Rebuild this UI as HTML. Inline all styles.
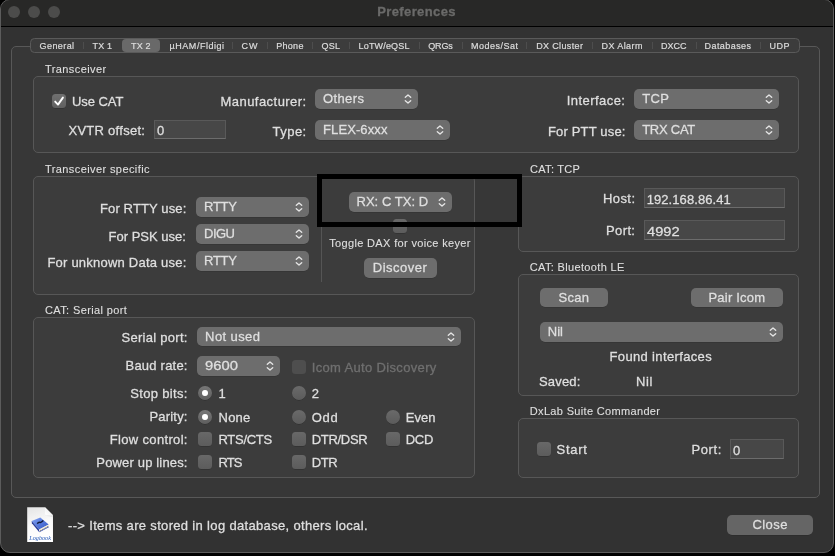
<!DOCTYPE html>
<html lang="en"><head><meta charset="utf-8"><title>Preferences</title>
<style>
html,body{margin:0;padding:0;background:#000;}
body{width:835px;height:556px;overflow:hidden;position:relative;font-family:"Liberation Sans",sans-serif;}
#win{position:absolute;left:0;top:-1px;width:832px;height:552px;background:#323232;border:1px solid #5c5c5c;border-radius:10px;overflow:hidden;}
#tb{position:absolute;left:0;top:0;width:835px;height:26px;background:#282827;border-bottom:1px solid #000;}
.tl{position:absolute;top:5.9px;width:12px;height:12px;border-radius:50%;background:#4c4c4b;}
.t{position:absolute;white-space:pre;color:#dfdfdf;-webkit-text-stroke:0.3px currentColor;}
#txt{position:absolute;left:0;top:0;width:835px;height:556px;will-change:transform;}
.s13{font-size:13px;line-height:16px;}
.s11{font-size:11px;line-height:14px;-webkit-text-stroke-width:0.12px;}
.s9{font-size:9px;line-height:12px;-webkit-text-stroke-width:0.2px;}
.title{font-weight:bold;color:#6a6a69;}
.tab{color:#dcdcdc;}
.dim{color:#6f6f6f;}
.gb{position:absolute;box-sizing:border-box;border:1px solid #575757;border-radius:5px;background:#3c3c3c;}
.gb.outer{background:#373737;border-color:#585858;}
.tabbar{position:absolute;box-sizing:border-box;border:1px solid #5a5a5a;border-radius:4.5px;background:#3c3c3c;}
.tabsel{position:absolute;box-sizing:border-box;border-radius:4px;background:#696969;}
.tsep{position:absolute;width:1px;height:7px;background:#4d4d4d;}
.vsep{position:absolute;width:1px;background:#555;}
.pop{position:absolute;box-sizing:border-box;border-radius:5px;background:rgba(255,255,255,.25);box-shadow:0 0.5px 0.5px rgba(0,0,0,.2);}
.fld{position:absolute;box-sizing:border-box;background:#474747;border:1px solid #595959;border-bottom-color:#6c6c6c;}
.cb{position:absolute;width:14px;height:14px;box-sizing:border-box;border-radius:3.5px;background:linear-gradient(#686868,#5c5c5c);box-shadow:0 0.5px 0.5px rgba(0,0,0,.3);}
.cb.on{background:linear-gradient(#707070,#606060);}
.cb.dimc{background:#4e4e4e;box-shadow:none;}
.cb svg{position:absolute;left:0;top:0;}
.rb{position:absolute;width:14px;height:14px;box-sizing:border-box;border-radius:50%;background:linear-gradient(#6a6a6a,#5b5b5b);box-shadow:0 0.5px 0.5px rgba(0,0,0,.3);}
.rb.on{background:linear-gradient(#787878,#5e5e5e);}
.rb i{position:absolute;left:4.1px;top:4.2px;width:5.8px;height:5.8px;border-radius:50%;background:#fff;}
.chev,.icon{position:absolute;}
.icon{will-change:transform;}
#ann{position:absolute;box-sizing:border-box;left:317px;top:174px;width:205px;height:53px;border:5px solid #000;}
</style></head>
<body>
<div id="win"><div id="tb"></div></div>
<div class="tl" style="left:8px"></div>
<div class="tl" style="left:28px"></div>
<div class="tl" style="left:48px"></div>
<div class="gb outer" style="left:11px;top:46px;width:808.5px;height:452px"></div>
<div class="tabbar" style="left:30px;top:38px;width:770px;height:15px"></div>
<div class="tabsel" style="left:122px;top:39px;width:38px;height:13px"></div>
<div class="tsep" style="left:82.5px;top:42px"></div>
<div class="tsep" style="left:232.2px;top:42px"></div>
<div class="tsep" style="left:267.1px;top:42px"></div>
<div class="tsep" style="left:312.3px;top:42px"></div>
<div class="tsep" style="left:349.2px;top:42px"></div>
<div class="tsep" style="left:418.5px;top:42px"></div>
<div class="tsep" style="left:461.5px;top:42px"></div>
<div class="tsep" style="left:526.1px;top:42px"></div>
<div class="tsep" style="left:591.5px;top:42px"></div>
<div class="tsep" style="left:651.8px;top:42px"></div>
<div class="tsep" style="left:695.5px;top:42px"></div>
<div class="tsep" style="left:759.5px;top:42px"></div>
<div class="gb" style="left:33px;top:76px;width:766px;height:77px"></div>
<div class="gb" style="left:33px;top:176px;width:442px;height:119px"></div>
<div class="gb" style="left:518px;top:176px;width:281px;height:76px"></div>
<div class="gb" style="left:518px;top:274px;width:281px;height:122px"></div>
<div class="gb" style="left:518px;top:418px;width:281px;height:60px"></div>
<div class="gb" style="left:33px;top:317px;width:442px;height:161px"></div>
<div class="vsep" style="left:320.5px;top:184px;height:98px"></div>
<div class="cb on" style="left:52px;top:94.3px"><svg width="14" height="14" viewBox="0 0 14 14"><path d="M3.2 7.6 L6 10.6 L10.9 3.6" fill="none" stroke="#fff" stroke-width="1.9" stroke-linecap="round" stroke-linejoin="round"/></svg></div>
<div class="fld" style="left:154px;top:120px;width:72px;height:19px"></div>
<div class="pop" style="left:315px;top:89px;width:103px;height:20px"></div><svg class="chev" style="left:403.0px;top:91.8px" width="10" height="14" viewBox="-5 -7 10 14"><path d="M-2.7 -1.8 L0 -4.1 L2.7 -1.8 M-2.7 1.8 L0 4.1 L2.7 1.8" fill="none" stroke="#e6e6e6" stroke-width="1.35" stroke-linecap="round" stroke-linejoin="round"/></svg>
<div class="pop" style="left:315px;top:120.3px;width:135px;height:19.700000000000003px"></div><svg class="chev" style="left:435.0px;top:123.0px" width="10" height="14" viewBox="-5 -7 10 14"><path d="M-2.7 -1.8 L0 -4.1 L2.7 -1.8 M-2.7 1.8 L0 4.1 L2.7 1.8" fill="none" stroke="#e6e6e6" stroke-width="1.35" stroke-linecap="round" stroke-linejoin="round"/></svg>
<div class="pop" style="left:634px;top:89px;width:145.29999999999995px;height:20px"></div><svg class="chev" style="left:764.3px;top:91.8px" width="10" height="14" viewBox="-5 -7 10 14"><path d="M-2.7 -1.8 L0 -4.1 L2.7 -1.8 M-2.7 1.8 L0 4.1 L2.7 1.8" fill="none" stroke="#e6e6e6" stroke-width="1.35" stroke-linecap="round" stroke-linejoin="round"/></svg>
<div class="pop" style="left:634px;top:120.3px;width:145.29999999999995px;height:19.700000000000003px"></div><svg class="chev" style="left:764.3px;top:123.0px" width="10" height="14" viewBox="-5 -7 10 14"><path d="M-2.7 -1.8 L0 -4.1 L2.7 -1.8 M-2.7 1.8 L0 4.1 L2.7 1.8" fill="none" stroke="#e6e6e6" stroke-width="1.35" stroke-linecap="round" stroke-linejoin="round"/></svg>
<div class="pop" style="left:196px;top:197px;width:113px;height:19.5px"></div><svg class="chev" style="left:294.0px;top:199.6px" width="10" height="14" viewBox="-5 -7 10 14"><path d="M-2.7 -1.8 L0 -4.1 L2.7 -1.8 M-2.7 1.8 L0 4.1 L2.7 1.8" fill="none" stroke="#e6e6e6" stroke-width="1.35" stroke-linecap="round" stroke-linejoin="round"/></svg>
<div class="pop" style="left:196px;top:224.2px;width:113px;height:19.80000000000001px"></div><svg class="chev" style="left:294.0px;top:226.9px" width="10" height="14" viewBox="-5 -7 10 14"><path d="M-2.7 -1.8 L0 -4.1 L2.7 -1.8 M-2.7 1.8 L0 4.1 L2.7 1.8" fill="none" stroke="#e6e6e6" stroke-width="1.35" stroke-linecap="round" stroke-linejoin="round"/></svg>
<div class="pop" style="left:196px;top:251.3px;width:113px;height:19.69999999999999px"></div><svg class="chev" style="left:294.0px;top:253.9px" width="10" height="14" viewBox="-5 -7 10 14"><path d="M-2.7 -1.8 L0 -4.1 L2.7 -1.8 M-2.7 1.8 L0 4.1 L2.7 1.8" fill="none" stroke="#e6e6e6" stroke-width="1.35" stroke-linecap="round" stroke-linejoin="round"/></svg>
<div class="pop" style="left:348.8px;top:192px;width:103.19999999999999px;height:19.5px"></div><svg class="chev" style="left:437.0px;top:194.6px" width="10" height="14" viewBox="-5 -7 10 14"><path d="M-2.7 -1.8 L0 -4.1 L2.7 -1.8 M-2.7 1.8 L0 4.1 L2.7 1.8" fill="none" stroke="#e6e6e6" stroke-width="1.35" stroke-linecap="round" stroke-linejoin="round"/></svg>
<div class="cb" style="left:393px;top:219px"></div>
<div class="pop" style="left:364px;top:258px;width:73px;height:19.5px"></div>
<div class="fld" style="left:644px;top:188px;width:141px;height:19.5px"></div>
<div class="fld" style="left:644px;top:220.2px;width:141px;height:19.600000000000023px"></div>
<div class="pop" style="left:540.3px;top:288.2px;width:67.40000000000009px;height:19.30000000000001px"></div>
<div class="pop" style="left:691px;top:288.2px;width:92px;height:19.30000000000001px"></div>
<div class="pop" style="left:540px;top:322px;width:243px;height:19.600000000000023px"></div><svg class="chev" style="left:768.0px;top:324.6px" width="10" height="14" viewBox="-5 -7 10 14"><path d="M-2.7 -1.8 L0 -4.1 L2.7 -1.8 M-2.7 1.8 L0 4.1 L2.7 1.8" fill="none" stroke="#e6e6e6" stroke-width="1.35" stroke-linecap="round" stroke-linejoin="round"/></svg>
<div class="cb" style="left:537px;top:442.3px"></div>
<div class="fld" style="left:730px;top:439px;width:54px;height:20px"></div>
<div class="pop" style="left:197.2px;top:327px;width:263.8px;height:19.399999999999977px"></div><svg class="chev" style="left:446.0px;top:329.5px" width="10" height="14" viewBox="-5 -7 10 14"><path d="M-2.7 -1.8 L0 -4.1 L2.7 -1.8 M-2.7 1.8 L0 4.1 L2.7 1.8" fill="none" stroke="#e6e6e6" stroke-width="1.35" stroke-linecap="round" stroke-linejoin="round"/></svg>
<div class="pop" style="left:197.2px;top:356px;width:82.80000000000001px;height:19.5px"></div><svg class="chev" style="left:265.0px;top:358.6px" width="10" height="14" viewBox="-5 -7 10 14"><path d="M-2.7 -1.8 L0 -4.1 L2.7 -1.8 M-2.7 1.8 L0 4.1 L2.7 1.8" fill="none" stroke="#e6e6e6" stroke-width="1.35" stroke-linecap="round" stroke-linejoin="round"/></svg>
<div class="cb dimc" style="left:292px;top:360.2px"></div>
<div class="rb on" style="left:198px;top:386px"><i></i></div>
<div class="rb" style="left:292px;top:386px"></div>
<div class="rb on" style="left:198px;top:410px"><i></i></div>
<div class="rb" style="left:292px;top:410px"></div>
<div class="rb" style="left:386px;top:410px"></div>
<div class="cb" style="left:198.2px;top:432px"></div>
<div class="cb" style="left:292px;top:432px"></div>
<div class="cb" style="left:386px;top:432px"></div>
<div class="cb" style="left:198.2px;top:455px"></div>
<div class="cb" style="left:292px;top:455px"></div>
<div class="pop" style="left:727px;top:515px;width:86.29999999999995px;height:20px"></div>
<svg class="icon" style="left:26.9px;top:506.8px" width="26.2" height="35.3" viewBox="0 0 26.2 35.3">
<defs><linearGradient id="pg" x1="0" y1="0" x2="0.25" y2="1"><stop offset="0" stop-color="#e4e4e4"/><stop offset="0.55" stop-color="#fafafa"/><stop offset="1" stop-color="#ffffff"/></linearGradient>
<linearGradient id="fd" x1="0" y1="1" x2="1" y2="0"><stop offset="0" stop-color="#ffffff"/><stop offset="0.5" stop-color="#f4f4f4"/><stop offset="1" stop-color="#c9c9c9"/></linearGradient>
<linearGradient id="bk" x1="0" y1="0" x2="1" y2="1"><stop offset="0" stop-color="#86a6f2"/><stop offset="0.5" stop-color="#5679dc"/><stop offset="1" stop-color="#3656bf"/></linearGradient></defs>
<path d="M0.2 0.2 H18 L26 8.2 V35.1 H0.2 Z" fill="url(#pg)"/>
<path d="M18 0.2 L26 8.2 H19.6 Q18 8.2 18 6.6 Z" fill="url(#fd)"/>
<path d="M18.2 8.6 H26 V10.2 Z" fill="#dedede" opacity="0.7"/>
<path d="M4.7 14.1 L13.3 10.4 L21.7 17.6 L12.1 22.5 Z" fill="url(#bk)"/>
<path d="M4.7 14.1 L12.1 22.5 L12.3 25.2 L4.9 16.2 Z" fill="#2a3f9c"/>
<path d="M12.1 22.5 L21.7 17.6 L21.8 19.5 L12.3 24.6 Z" fill="#efeadd"/>
<path d="M12.3 24.6 L21.8 19.5 L21.8 20.2 L12.3 25.3 Z" fill="#2d45a6"/>
<path d="M13.6 23.9 v-0.9 M15.4 22.95 v-0.9 M17.2 22 v-0.9 M19 21 v-0.9 M20.6 20.1 v-0.9" stroke="#5a5648" stroke-width="0.7"/>
<path d="M10.3 16.7 q1.4 -1.9 2.6 -1.3 t3.4 -1.8" fill="none" stroke="#141c3c" stroke-width="1.5"/>
<text x="13.1" y="32.7" font-family="Liberation Serif, serif" font-style="italic" font-size="6.3" fill="#2559b8" text-anchor="middle" textLength="21.6" lengthAdjust="spacingAndGlyphs">Logbook</text>
</svg>
<div id="txt"><span class="t s13 title" style="left:377.2px;top:4px;letter-spacing:0.385px;">Preferences</span>
<span class="t s9 tab" style="left:39.6px;top:40px;letter-spacing:0.411px;">General</span>
<span class="t s9 tab" style="left:92.6px;top:40px;letter-spacing:0.128px;">TX 1</span>
<span class="t s9 tab" style="left:131.1px;top:40px;letter-spacing:0.095px;">TX 2</span>
<span class="t s9 tab" style="left:169.6px;top:40px;letter-spacing:0.530px;">µHAM/Fldigi</span>
<span class="t s9 tab" style="left:241.6px;top:40px;letter-spacing:0.800px;">CW</span>
<span class="t s9 tab" style="left:276.3px;top:40px;letter-spacing:0.267px;">Phone</span>
<span class="t s9 tab" style="left:321.6px;top:40px;letter-spacing:0.242px;">QSL</span>
<span class="t s9 tab" style="left:358.6px;top:40px;letter-spacing:0.159px;">LoTW/eQSL</span>
<span class="t s9 tab" style="left:428.2px;top:40px;letter-spacing:-0.139px;">QRGs</span>
<span class="t s9 tab" style="left:471.1px;top:40px;letter-spacing:0.471px;">Modes/Sat</span>
<span class="t s9 tab" style="left:536.2px;top:40px;letter-spacing:0.354px;">DX Cluster</span>
<span class="t s9 tab" style="left:601.6px;top:40px;letter-spacing:0.398px;">DX Alarm</span>
<span class="t s9 tab" style="left:661.0px;top:40px;letter-spacing:-0.039px;">DXCC</span>
<span class="t s9 tab" style="left:704.6px;top:40px;letter-spacing:0.421px;">Databases</span>
<span class="t s9 tab" style="left:769.6px;top:40px;letter-spacing:0.392px;">UDP</span>
<span class="t s11" style="left:45.0px;top:62px;letter-spacing:0.404px;">Transceiver</span>
<span class="t s11" style="left:45.0px;top:162px;letter-spacing:0.405px;">Transceiver specific</span>
<span class="t s11" style="left:530.1px;top:162px;letter-spacing:0.273px;">CAT: TCP</span>
<span class="t s11" style="left:529.8px;top:260px;letter-spacing:0.339px;">CAT: Bluetooth LE</span>
<span class="t s11" style="left:45.0px;top:303px;letter-spacing:0.379px;">CAT: Serial port</span>
<span class="t s11" style="left:529.8px;top:404px;letter-spacing:0.334px;">DxLab Suite Commander</span>
<span class="t s11" style="left:329.2px;top:236px;letter-spacing:0.345px;">Toggle DAX for voice keyer</span>
<span class="t s13" style="left:72.0px;top:94px;letter-spacing:-0.061px;">Use CAT</span>
<span class="t s13" style="left:68.5px;top:123px;letter-spacing:0.266px;">XVTR offset:</span>
<span class="t s13" style="left:157.1px;top:123px;">0</span>
<span class="t s13" style="left:220.5px;top:94px;letter-spacing:0.458px;">Manufacturer:</span>
<span class="t s13" style="left:323.0px;top:91px;letter-spacing:0.377px;">Others</span>
<span class="t s13" style="left:272.5px;top:124px;letter-spacing:0.476px;">Type:</span>
<span class="t s13" style="left:323.0px;top:122px;letter-spacing:0.103px;">FLEX-6xxx</span>
<span class="t s13" style="left:566.7px;top:93px;letter-spacing:0.455px;">Interface:</span>
<span class="t s13" style="left:642.2px;top:91px;letter-spacing:0.400px;">TCP</span>
<span class="t s13" style="left:547.9px;top:124px;letter-spacing:0.180px;">For PTT use:</span>
<span class="t s13" style="left:642.2px;top:122px;letter-spacing:-0.259px;">TRX CAT</span>
<span class="t s13" style="left:100.0px;top:201px;letter-spacing:0.127px;">For RTTY use:</span>
<span class="t s13" style="left:204.0px;top:199px;letter-spacing:-0.240px;">RTTY</span>
<span class="t s13" style="left:108.5px;top:229px;letter-spacing:0.008px;">For PSK use:</span>
<span class="t s13" style="left:204.0px;top:226px;letter-spacing:-0.500px;">DIGU</span>
<span class="t s13" style="left:47.4px;top:255px;letter-spacing:0.225px;">For unknown Data use:</span>
<span class="t s13" style="left:204.0px;top:253px;letter-spacing:-0.240px;">RTTY</span>
<span class="t s13" style="left:356.5px;top:194px;letter-spacing:0.032px;">RX: C TX: D</span>
<span class="t s13" style="left:372.8px;top:260px;letter-spacing:0.489px;">Discover</span>
<span class="t s13" style="left:602.9px;top:191px;letter-spacing:0.439px;">Host:</span>
<span class="t s13" style="left:646.7px;top:192px;letter-spacing:0.080px;">192.168.86.41</span>
<span class="t s13" style="left:606.0px;top:223px;letter-spacing:0.383px;">Port:</span>
<span class="t s13" style="left:646.7px;top:224px;transform:scaleX(1.1272);transform-origin:0 0;">4992</span>
<span class="t s13" style="left:558.5px;top:290px;letter-spacing:0.320px;">Scan</span>
<span class="t s13" style="left:708.5px;top:290px;letter-spacing:0.199px;">Pair Icom</span>
<span class="t s13" style="left:547.8px;top:324px;letter-spacing:0.014px;">Nil</span>
<span class="t s13" style="left:609.5px;top:349px;letter-spacing:0.357px;">Found interfaces</span>
<span class="t s13" style="left:539.0px;top:374px;letter-spacing:0.163px;">Saved:</span>
<span class="t s13" style="left:636.0px;top:374px;letter-spacing:0.564px;">Nil</span>
<span class="t s13" style="left:556.5px;top:442px;letter-spacing:0.708px;">Start</span>
<span class="t s13" style="left:691.5px;top:442px;letter-spacing:0.583px;">Port:</span>
<span class="t s13" style="left:733.0px;top:443px;">0</span>
<span class="t s13" style="left:121.5px;top:330px;letter-spacing:0.284px;">Serial port:</span>
<span class="t s13" style="left:205.1px;top:329px;letter-spacing:0.408px;">Not used</span>
<span class="t s13" style="left:125.5px;top:358px;letter-spacing:0.222px;">Baud rate:</span>
<span class="t s13" style="left:205.1px;top:358px;transform:scaleX(1.1375);transform-origin:0 0;">9600</span>
<span class="t s13 dim" style="left:311.7px;top:360px;letter-spacing:0.344px;">Icom Auto Discovery</span>
<span class="t s13" style="left:130.2px;top:386px;letter-spacing:0.344px;">Stop bits:</span>
<span class="t s13" style="left:218.5px;top:386px;">1</span>
<span class="t s13" style="left:311.7px;top:386px;">2</span>
<span class="t s13" style="left:149.4px;top:409px;letter-spacing:0.209px;">Parity:</span>
<span class="t s13" style="left:218.5px;top:410px;letter-spacing:0.241px;">None</span>
<span class="t s13" style="left:311.7px;top:410px;letter-spacing:0.711px;">Odd</span>
<span class="t s13" style="left:405.8px;top:410px;letter-spacing:0.020px;">Even</span>
<span class="t s13" style="left:109.8px;top:432px;letter-spacing:0.333px;">Flow control:</span>
<span class="t s13" style="left:218.5px;top:432px;letter-spacing:-0.282px;">RTS/CTS</span>
<span class="t s13" style="left:311.7px;top:432px;letter-spacing:-0.297px;">DTR/DSR</span>
<span class="t s13" style="left:405.8px;top:432px;letter-spacing:-0.336px;">DCD</span>
<span class="t s13" style="left:96.3px;top:455px;letter-spacing:0.165px;">Power up lines:</span>
<span class="t s13" style="left:218.5px;top:455px;letter-spacing:-0.883px;">RTS</span>
<span class="t s13" style="left:311.7px;top:455px;letter-spacing:-0.359px;">DTR</span>
<span class="t s13" style="left:68.0px;top:518px;letter-spacing:0.332px;">--&gt; Items are stored in log database, others local.</span>
<span class="t s13" style="left:752.4px;top:517px;letter-spacing:0.463px;">Close</span></div>
<div id="ann"></div>
</body></html>
